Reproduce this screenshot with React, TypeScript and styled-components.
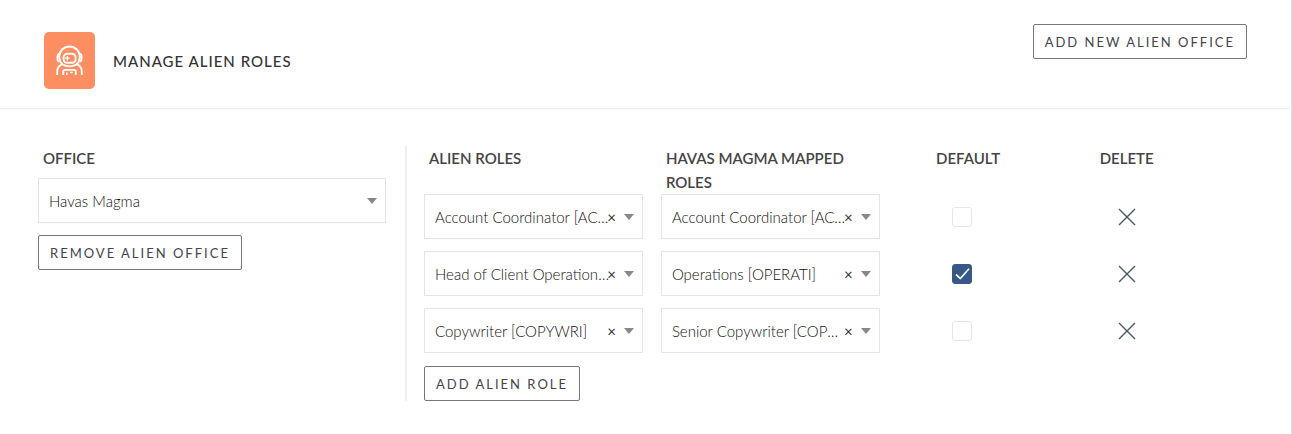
import React, { useState } from "react";
import styled, { createGlobalStyle } from "styled-components";

const GlobalStyle = createGlobalStyle`
  *, *::before, *::after { box-sizing: border-box; }
  body {
    margin: 0;
    background: #fff;
    color: #444;
    font-family: Lato, "Liberation Sans", sans-serif;
    font-size: 15px;
    line-height: 24px;
  }
`;

const Panel = styled.main`
  min-height: 100vh;
  border-right: 1px solid #dfe3ea;
`;

const Header = styled.header`
  display: flex;
  align-items: flex-start;
  justify-content: space-between;
  padding: 24px 44px 19px;
  border-bottom: 1px solid #ebeef2;
`;

const Brand = styled.div`
  display: flex;
  align-items: center;
  gap: 18px;
  padding-top: 8px;
`;

const IconTile = styled.span`
  display: flex;
  align-items: center;
  justify-content: center;
  width: 51px;
  height: 57px;
  border-radius: 5px;
  background: #fc8e61;
`;

const Title = styled.h1`
  margin: 0;
  font-size: 15px;
  font-weight: 500;
  letter-spacing: 1px;
  color: #333;
`;

const OutlineButton = styled.button`
  height: 35px;
  padding: 0 11px;
  border: 1px solid #777;
  border-radius: 2px;
  background: #fff;
  color: #44444c;
  font-family: inherit;
  font-size: 13px;
  font-weight: 400;
  line-height: 24px;
  letter-spacing: 2px;
  white-space: nowrap;
  cursor: pointer;
`;

const Content = styled.div`
  display: grid;
  grid-template-columns: minmax(0, 369fr) minmax(0, 803fr);
  padding: 37px 81px 32px 38px;
`;

const OfficeColumn = styled.section`
  display: flex;
  flex-direction: column;
  align-items: flex-start;
  padding-right: 19px;
  border-right: 2px solid #eee;
`;

const OfficeLabel = styled.label`
  margin-bottom: 8px;
  padding-left: 5px;
  font-weight: 600;
`;

const RolesColumn = styled.section`
  min-width: 0;
`;

const SelectBox = styled.div`
  display: grid;
  grid-template-columns: minmax(0, 1fr) auto;
  align-items: center;
  width: 100%;
  height: 45px;
  border: 1px solid #e4e4e4;
`;

const Select = styled.select<{ $clearable?: boolean }>`
  grid-area: 1 / 1 / 2 / 3;
  width: 100%;
  height: 100%;
  padding: 0 ${(p) => (p.$clearable ? 31 : 28)}px 0 10px;
  border: 0;
  appearance: none;
  background: transparent;
  color: #111;
  font-family: inherit;
  font-size: 15px;
  font-weight: 300;
  overflow: hidden;
  text-overflow: ellipsis;
  white-space: nowrap;
`;

const SelectTools = styled.span`
  grid-area: 1 / 2;
  display: flex;
  align-items: center;
  gap: 8px;
  padding-right: 8px;
  pointer-events: none;
`;

const ClearButton = styled.button`
  padding: 0;
  border: 0;
  background: none;
  color: #333;
  font-family: inherit;
  font-size: 15px;
  line-height: 24px;
  cursor: pointer;
  pointer-events: auto;
`;

const Caret = styled.span`
  border: 5px solid transparent;
  border-top: 6px solid #888;
  border-bottom: 0;
`;

const RemoveRow = styled.div`
  margin-top: 12px;
`;

const RolesTable = styled.table`
  width: 100%;
  table-layout: fixed;
  border-collapse: collapse;
`;

const NarrowCol = styled.col`
  width: 20.5%;
`;

const HeadCell = styled.th`
  padding: 0 0 0 22px;
  font-weight: 600;
  text-align: left;
  vertical-align: top;
`;

const ActionHeadCell = styled(HeadCell)<{ $indent?: number }>`
  padding: 0 2px 0 ${(p) => p.$indent ?? 0}px;
  text-align: center;
`;

const FieldCell = styled.td`
  padding: 0 1px 12px 17px;
`;

const ActionCell = styled.td`
  padding: 0 2px 12px 0;
`;

const TickBox = styled.label`
  display: grid;
  justify-content: center;
  svg {
    grid-area: 1 / 1;
    pointer-events: none;
  }
`;

const Tick = styled.input`
  grid-area: 1 / 1;
  width: 20px;
  height: 20px;
  margin: 0;
  border: 1px solid #e6e6e6;
  border-radius: 3px;
  appearance: none;
  background: #fff;
  &:checked {
    border-color: #385887;
    background: #385887;
  }
`;

const DeleteButton = styled.button`
  display: block;
  margin: 0 auto;
  padding: 0;
  border: 0;
  background: none;
  color: #4a5565;
  cursor: pointer;
  svg {
    display: block;
  }
`;

const AddRow = styled.div`
  padding: 1px 0 0 17px;
`;

const AstronautIcon = () => (
  <svg width="28" height="32" viewBox="0 0 28 32" fill="none" stroke="#fff" strokeWidth="1.9" aria-hidden="true">
    <path d="M6.4 19.2A10.3 10.3 0 1 1 20.6 19.2Q17.5 21.4 13.5 21.4T6.4 19.2Z" />
    <path d="M3.4 8.8Q1.5 9.2 1.5 11v3.5Q1.5 16.2 3.6 16.7M23.6 8.8q1.9 .4 1.9 2.2v3.5q0 1.7-2.1 2.2" />
    <rect x="7.6" y="8.8" width="12" height="9" rx="3.6" />
    <path d="M11.3 11v4.4M9.1 13.2h4.400" strokeWidth="1.3" />
    <path d="M1.2 30V26.5Q1.2 21.6 5.8 19.3M25.8 30V26.5Q25.8 21.6 21.2 19.3" />
    <path d="M7.2 30V26.5Q7.2 24.9 8.8 24.9h9.4q1.6 0 1.6 1.6V30" />
    <path d="M10.7 27.5V30M14 27.6h2.6" strokeWidth="1.5" />
  </svg>
);

const CrossIcon = () => (
  <svg width="18" height="18" viewBox="0 0 18 18" fill="none" stroke="currentColor" strokeWidth="1.4" aria-hidden="true">
    <path d="M1 1l16 16M17 1L1 17" />
  </svg>
);

const CheckIcon = () => (
  <svg width="20" height="20" viewBox="0 0 20 20" fill="none" stroke="#fff" strokeWidth="1.7" aria-hidden="true">
    <path d="M4 10.3l4.3 4.3L17 4.8" />
  </svg>
);

interface PickerProps {
  label?: string;
  id?: string;
  value: string;
  clearable?: boolean;
}

const Picker = ({ label, id, value, clearable }: PickerProps) => (
  <SelectBox>
    <Select id={id} aria-label={label} $clearable={clearable} defaultValue={value}>
      <option>{value}</option>
    </Select>
    <SelectTools>
      {clearable && <ClearButton type="button" aria-label={`Clear ${label}`}>×</ClearButton>}
      <Caret />
    </SelectTools>
  </SelectBox>
);

const roles = [
  { alien: "Account Coordinator [ACCOORDI]", mapped: "Account Coordinator [ACCOORDI]" },
  { alien: "Head of Client Operations [HEADCLOP]", mapped: "Operations [OPERATI]" },
  { alien: "Copywriter [COPYWRI]", mapped: "Senior Copywriter [COPWRSEN]" },
];

export default function App() {
  const [defaultRow, setDefaultRow] = useState(1);

  return (
    <>
      <GlobalStyle />
      <Panel>
        <Header>
          <Brand>
            <IconTile><AstronautIcon /></IconTile>
            <Title>MANAGE ALIEN ROLES</Title>
          </Brand>
          <OutlineButton type="button">ADD NEW ALIEN OFFICE</OutlineButton>
        </Header>
        <Content>
          <OfficeColumn>
            <OfficeLabel htmlFor="office">OFFICE</OfficeLabel>
            <Picker id="office" value="Havas Magma" />
            <RemoveRow>
              <OutlineButton type="button">REMOVE ALIEN OFFICE</OutlineButton>
            </RemoveRow>
          </OfficeColumn>
          <RolesColumn>
            <RolesTable>
              <colgroup>
                <col />
                <col />
                <NarrowCol />
                <NarrowCol />
              </colgroup>
              <thead>
                <tr>
                  <HeadCell scope="col">ALIEN ROLES</HeadCell>
                  <HeadCell scope="col">HAVAS MAGMA MAPPED ROLES</HeadCell>
                  <ActionHeadCell scope="col" $indent={12}>DEFAULT</ActionHeadCell>
                  <ActionHeadCell scope="col">DELETE</ActionHeadCell>
                </tr>
              </thead>
              <tbody>
                {roles.map((role, i) => (
                  <tr key={i}>
                    <FieldCell><Picker label="alien role" value={role.alien} clearable /></FieldCell>
                    <FieldCell><Picker label="mapped role" value={role.mapped} clearable /></FieldCell>
                    <ActionCell>
                      <TickBox>
                        <Tick
                          type="checkbox"
                          aria-label={`Default: ${role.alien}`}
                          checked={defaultRow === i}
                          onChange={() => setDefaultRow(i)}
                        />
                        {defaultRow === i && <CheckIcon />}
                      </TickBox>
                    </ActionCell>
                    <ActionCell>
                      <DeleteButton type="button" aria-label={`Delete ${role.alien}`}><CrossIcon /></DeleteButton>
                    </ActionCell>
                  </tr>
                ))}
              </tbody>
            </RolesTable>
            <AddRow>
              <OutlineButton type="button">ADD ALIEN ROLE</OutlineButton>
            </AddRow>
          </RolesColumn>
        </Content>
      </Panel>
    </>
  );
}
